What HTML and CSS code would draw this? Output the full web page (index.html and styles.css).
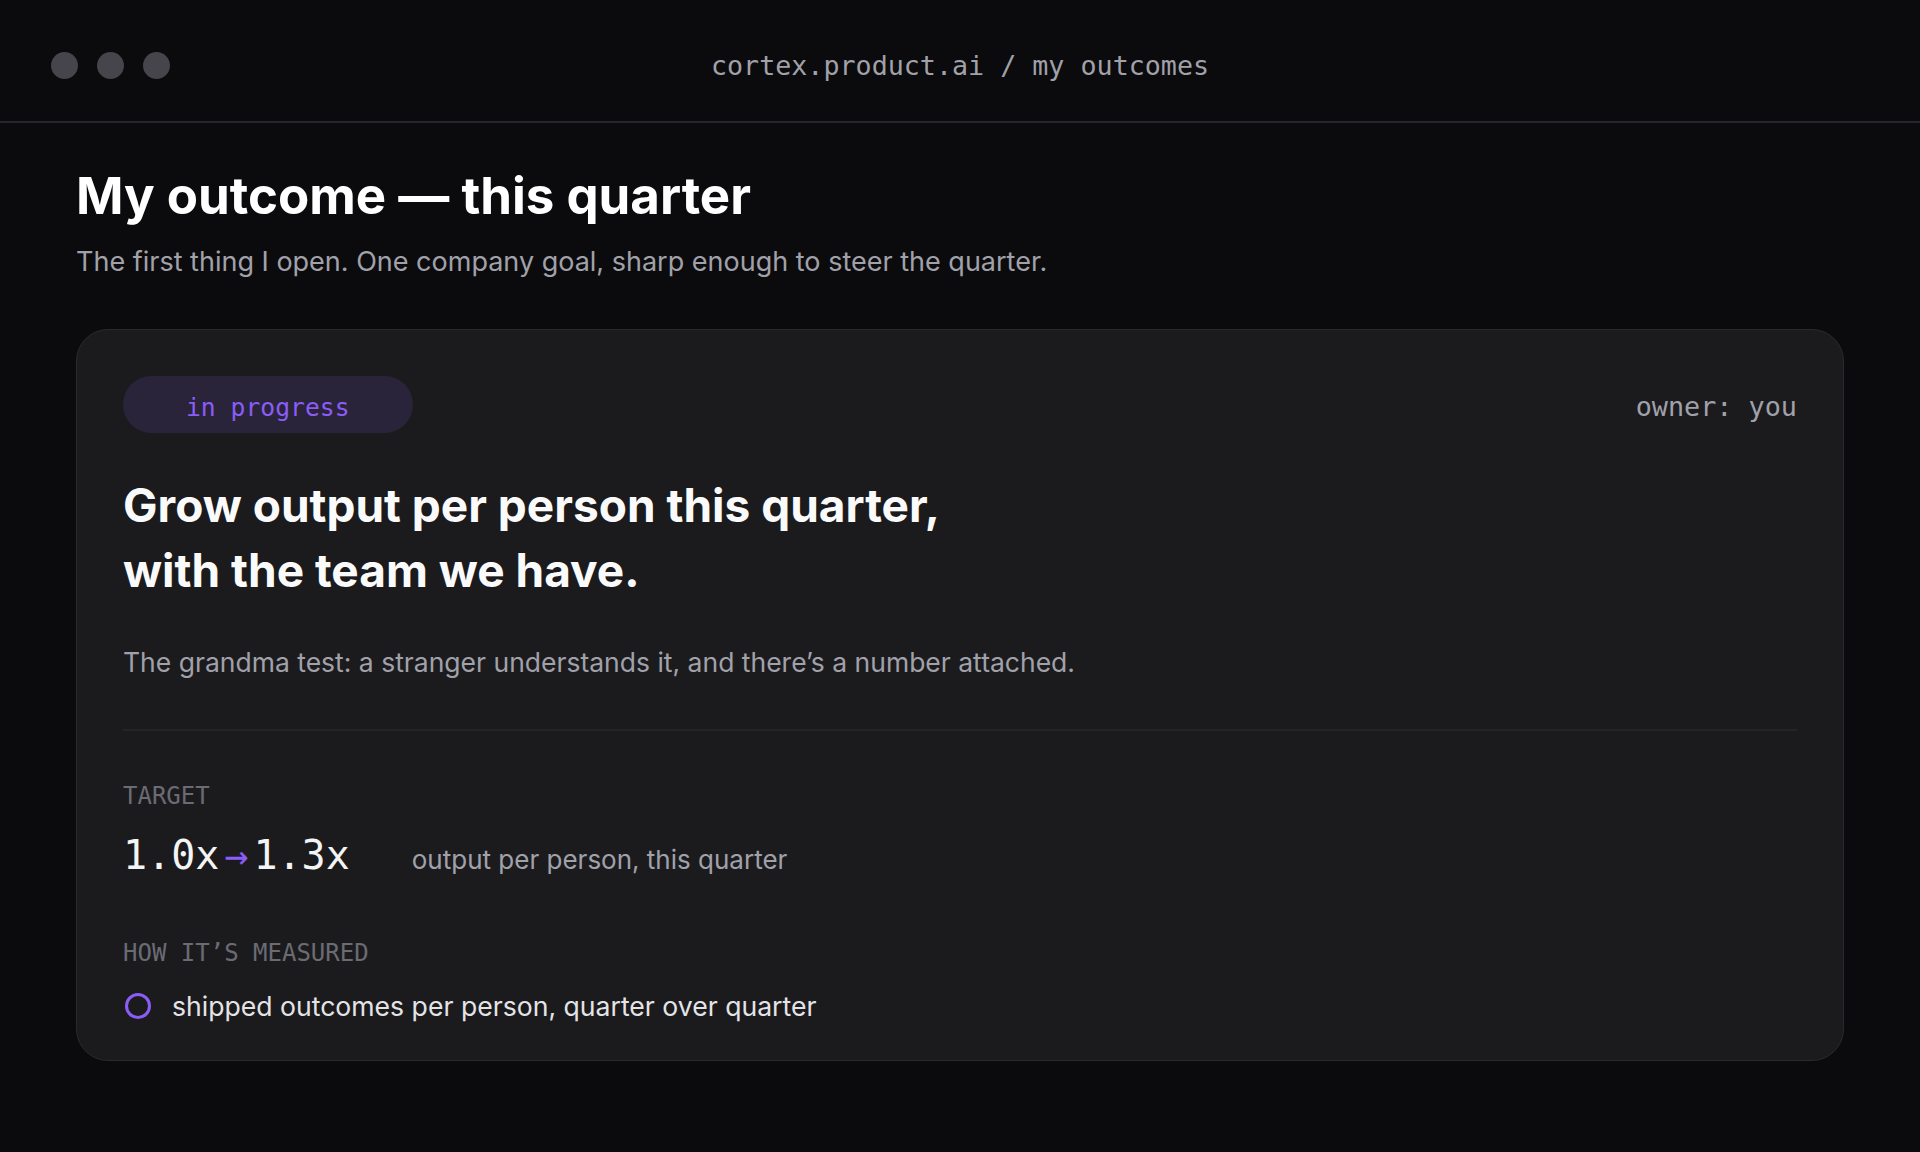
FILE: index.html
```html
<!DOCTYPE html>
<html lang="en">
<head>
  <meta charset="UTF-8" />
  <meta name="viewport" content="width=device-width, initial-scale=1" />
  <title>My outcomes</title>
  <link rel="stylesheet" href="styles.css">
</head>
<body>

  <header class="titlebar">
    <div class="dots">
      <span class="dot"></span>
      <span class="dot"></span>
      <span class="dot"></span>
    </div>
    <div class="address">cortex.product.ai / my outcomes</div>
    <div></div>
  </header>

  <main class="page">
    <h1>My outcome — this quarter</h1>
    <p class="lead">The first thing I open. One company goal, sharp enough to steer the quarter.</p>

    <section class="outcome-card">
      <div class="card-top">
        <span class="status-pill">in progress</span>
        <span class="owner">owner: you</span>
      </div>

      <h2 class="goal">Grow output per person this quarter,<br>with the team we have.</h2>
      <p class="goal-note">The grandma test: a stranger understands it, and there’s a number attached.</p>

      <hr class="divider">

      <div class="label">TARGET</div>
      <div class="target-row">
        <span class="target-value">1.0x<span class="arrow">→</span>1.3x</span>
        <span class="target-caption">output per person, this quarter</span>
      </div>

      <div class="label label-measure">HOW IT’S MEASURED</div>
      <ul class="measures">
        <li><span class="ring"></span>shipped outcomes per person, quarter over quarter</li>
      </ul>
    </section>
  </main>

</body>
</html>
```

FILE: styles.css
```css
body {
  margin: 0;
  background: #0b0b0d;
  color: #f4f4f5;
  font-family: Inter, "Noto Sans", sans-serif;
}

.titlebar {
  display: grid;
  grid-template-columns: 1fr auto 1fr;
  align-items: center;
  height: 111px;
  padding: 10px 51px 0;
  border-bottom: 2px solid #26262a;
}

.dots {
  display: flex;
  gap: 19px;
}

.dot {
  width: 27px;
  height: 27px;
  border-radius: 50%;
  background: #45454b;
}

.address {
  font-family: "DejaVu Sans Mono", monospace;
  font-size: 26.7px;
  color: #a1a1aa;
}

.page {
  padding: 42px 76px 0;
}

h1 {
  margin: 0;
  font-size: 51px;
  line-height: 1.2;
  font-weight: 700;
  color: #ffffff;
}

.lead {
  margin: 18px 0 49px;
  font-size: 27px;
  line-height: 36px;
  color: #a1a1aa;
}

.outcome-card {
  background: #1b1b1e;
  border: 1px solid #2a2a2e;
  border-radius: 32px;
  padding: 46px 46px 36px;
}

.card-top {
  display: flex;
  justify-content: space-between;
  align-items: center;
}

.status-pill {
  display: inline-flex;
  align-items: center;
  box-sizing: border-box;
  height: 57px;
  padding: 6px 63px 0;
  border-radius: 29px;
  background: #29243a;
  color: #8b5cf6;
  font-family: "DejaVu Sans Mono", monospace;
  font-size: 24.7px;
}

.owner {
  padding-top: 4px;
  font-family: "DejaVu Sans Mono", monospace;
  font-size: 26.8px;
  color: #a1a1aa;
}

.goal {
  margin: 40px 0 0;
  font-size: 46px;
  line-height: 65px;
  font-weight: 700;
  color: #fafafa;
}

.goal-note {
  margin: 41px 0 0;
  font-size: 26.5px;
  line-height: 36px;
  color: #a1a1aa;
}

.divider {
  margin: 49px 0 0;
  border: none;
  height: 2px;
  background: #252528;
}

.label {
  margin-top: 51px;
  font-family: "DejaVu Sans Mono", monospace;
  font-size: 24px;
  line-height: 1.2;
  color: #6b6b73;
}

.target-row {
  display: flex;
  align-items: baseline;
  gap: 62px;
  margin-top: 20px;
}

.target-value {
  font-family: "DejaVu Sans Mono", monospace;
  font-size: 40px;
  line-height: 1.2;
  color: #f4f4f5;
}

.arrow {
  color: #8b5cf6;
  margin: 0 5px;
}

.target-caption {
  font-size: 26px;
  color: #a1a1aa;
}

.label-measure {
  margin-top: 60px;
}

.measures {
  list-style: none;
  margin: 20px 0 0;
  padding: 0;
}

.measures li {
  display: flex;
  align-items: center;
  gap: 21px;
  font-size: 26.6px;
  line-height: 36px;
  color: #e4e4e7;
}

.ring {
  flex-shrink: 0;
  width: 20px;
  height: 20px;
  margin-left: 2px;
  border: 3.5px solid #8b5cf6;
  border-radius: 50%;
}
```
